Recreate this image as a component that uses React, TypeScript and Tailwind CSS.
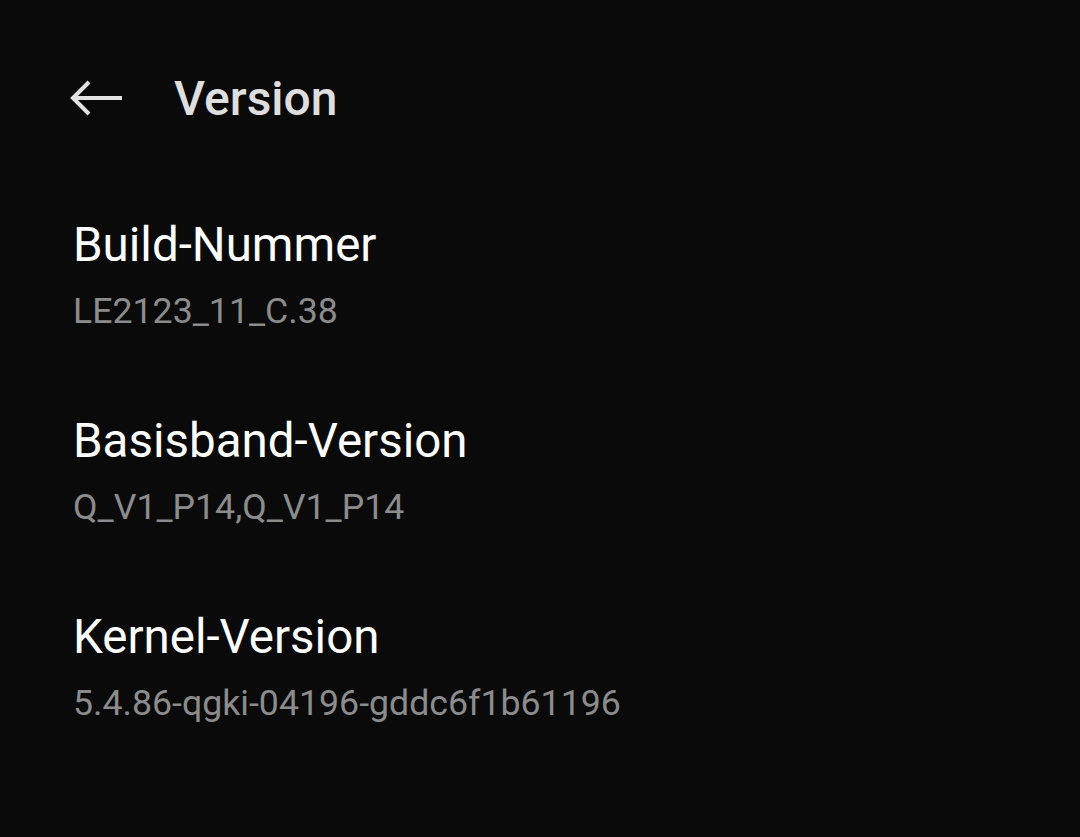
export default function App() {
  const items = [
    { title: 'Build-Nummer', value: 'LE2123_11_C.38' },
    { title: 'Basisband-Version', value: 'Q_V1_P14,Q_V1_P14' },
    { title: 'Kernel-Version', value: '5.4.86-qgki-04196-gddc6f1b61196' },
  ];

  return (
    <div className="min-h-screen w-full bg-[#0a0a0a] font-['Roboto',sans-serif]">
      <header className="flex h-[200px] items-center pl-[69px] pb-[2px]">
        <svg width="54" height="38" viewBox="0 0 54 38" fill="none" className="mb-[2px]">
          <path d="M53 19H4M20 3L4 19l16 16" stroke="#e2e2e2" strokeWidth="4" />
        </svg>
        <h1 className="ml-[51px] text-[48px] font-medium leading-none text-[#dedede]">Version</h1>
      </header>
      <div className="flex flex-col pl-[73px] pt-[15px]">
        {items.map((item) => (
          <div key={item.title} className="flex h-[196px] flex-col">
            <div className="text-[47.5px] leading-[60px] text-white">{item.title}</div>
            <div className="mt-[14px] text-[35.7px] leading-[44px] text-[#8c8c8c]">{item.value}</div>
          </div>
        ))}
      </div>
    </div>
  );
}
